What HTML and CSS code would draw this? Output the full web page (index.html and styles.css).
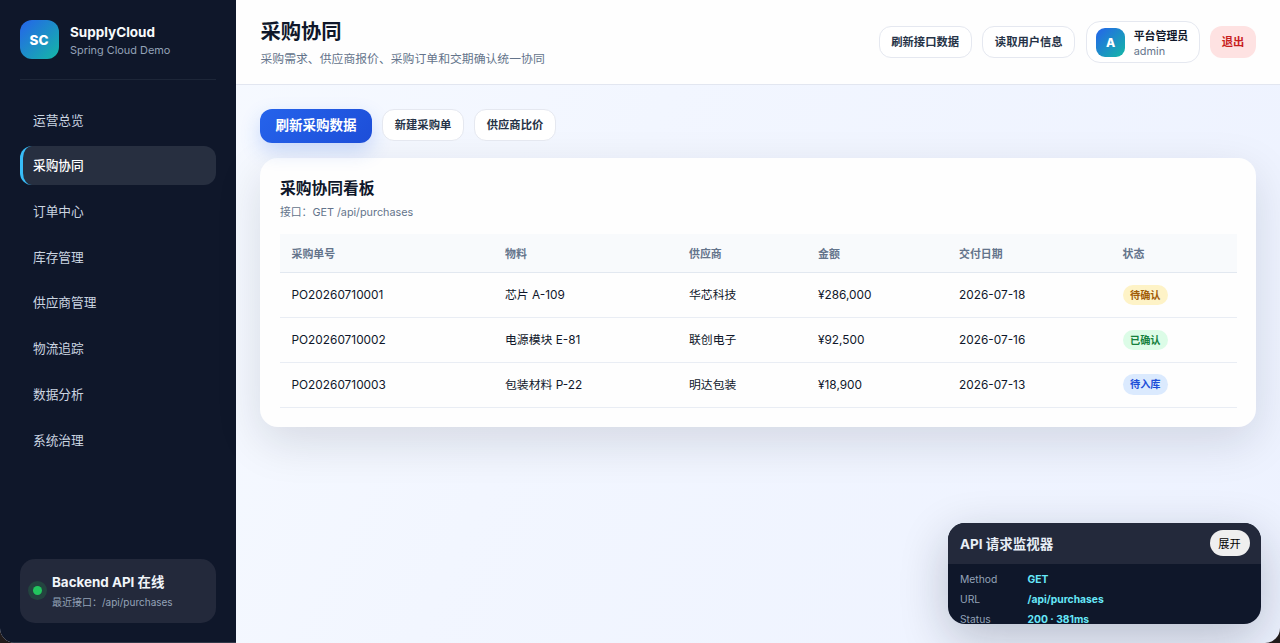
FILE: index.html
```html
<!DOCTYPE html>
<html lang="zh-CN">
<head>
<meta charset="utf-8">
<title>SupplyCloud</title>
<link rel="stylesheet" href="styles.css">
</head>
<body>
<div class="app">
  <aside class="sidebar">
    <div class="brand">
      <div class="logo">SC</div>
      <div>
        <div class="brand-name">SupplyCloud</div>
        <div class="brand-sub">Spring Cloud Demo</div>
      </div>
    </div>
    <nav class="nav">
      <a class="nav-item">运营总览</a>
      <a class="nav-item active">采购协同</a>
      <a class="nav-item">订单中心</a>
      <a class="nav-item">库存管理</a>
      <a class="nav-item">供应商管理</a>
      <a class="nav-item">物流追踪</a>
      <a class="nav-item">数据分析</a>
      <a class="nav-item">系统治理</a>
    </nav>
    <div class="status">
      <span class="dot"></span>
      <div>
        <div class="status-title">Backend API 在线</div>
        <div class="status-sub">最近接口：/api/purchases</div>
      </div>
    </div>
  </aside>
  <main class="main">
    <header class="topbar">
      <div>
        <h1 class="page-title">采购协同</h1>
        <p class="page-sub">采购需求、供应商报价、采购订单和交期确认统一协同</p>
      </div>
      <div class="actions">
        <button class="btn">刷新接口数据</button>
        <button class="btn">读取用户信息</button>
        <div class="user">
          <div class="avatar">A</div>
          <div>
            <div class="user-name">平台管理员</div>
            <div class="user-id">admin</div>
          </div>
        </div>
        <button class="btn logout">退出</button>
      </div>
    </header>
    <section class="content">
      <div class="toolbar">
        <button class="btn primary">刷新采购数据</button>
        <button class="btn tool">新建采购单</button>
        <button class="btn tool">供应商比价</button>
      </div>
      <div class="card">
        <h2 class="card-title">采购协同看板</h2>
        <p class="card-sub">接口：GET /api/purchases</p>
        <table class="table">
          <colgroup><col class="c-id"><col class="c-item"><col class="c-supplier"><col class="c-amount"><col class="c-date"><col></colgroup>
          <thead>
            <tr><th>采购单号</th><th>物料</th><th>供应商</th><th>金额</th><th>交付日期</th><th>状态</th></tr>
          </thead>
          <tbody>
            <tr><td>PO20260710001</td><td>芯片 A-109</td><td>华芯科技</td><td>¥286,000</td><td>2026-07-18</td><td><span class="pill amber">待确认</span></td></tr>
            <tr><td>PO20260710002</td><td>电源模块 E-81</td><td>联创电子</td><td>¥92,500</td><td>2026-07-16</td><td><span class="pill green">已确认</span></td></tr>
            <tr><td>PO20260710003</td><td>包装材料 P-22</td><td>明达包装</td><td>¥18,900</td><td>2026-07-13</td><td><span class="pill blue">待入库</span></td></tr>
          </tbody>
        </table>
      </div>
    </section>
  </main>
  <div class="monitor">
    <div class="monitor-head"><span>API 请求监视器</span><button class="expand">展开</button></div>
    <div class="monitor-body">
      <span>Method</span><b>GET</b>
      <span>URL</span><b>/api/purchases</b>
      <span>Status</span><b>200 · 381ms</b>
    </div>
  </div>
</div>
</body>
</html>
```
FILE: styles.css
```css
* { box-sizing: border-box; }
body {
  margin: 0;
  height: 643px;
  overflow: hidden;
  background: #211b1b;
  color: #0f172a;
  font-family: Inter, "Noto Sans CJK SC", sans-serif;
}
h1, h2, p { margin: 0; }
button { font-family: inherit; white-space: nowrap; }

.app {
  display: flex;
  height: 643px;
  overflow: hidden;
  border-radius: 0 0 15px 15px;
  background: linear-gradient(115deg, #f8fbff 0%, #f2f6ff 45%, #edf2ff 100%);
  position: relative;
}

.sidebar {
  display: flex;
  flex-direction: column;
  width: 236px;
  flex: none;
  padding: 20px 20px 20.5px 19.5px;
  background: #0f172a;
  box-shadow: inset 0 -1px #303849;
}
.brand {
  display: flex;
  gap: 11.5px;
  height: 60px;
  border-bottom: 1px solid #1d2638;
}
.logo, .avatar {
  display: grid;
  place-items: center;
  background: linear-gradient(135deg, #2563eb, #14b8a6);
  color: #fff;
  font-weight: 800;
}
.logo { width: 39px; height: 39px; border-radius: 12px; font-size: 13.5px; }
.brand-name { padding-top: 3px; font-size: 13.5px; font-weight: 700; line-height: 18px; color: #f8fafc; }
.brand-sub { font-size: 10.9px; line-height: 18px; color: #94a3b8; }

.nav { display: flex; flex-direction: column; gap: 6.7px; padding-top: 20.7px; }
.nav-item {
  height: 39px;
  padding-left: 10.5px;
  border-left: 3px solid transparent;
  border-radius: 12px;
  font-size: 12.7px;
  line-height: 40px;
  color: #cbd5e1;
}
.nav-item.active { background: #272f40; border-left-color: #38bdf8; color: #fff; font-weight: 500; }

.status {
  display: flex;
  align-items: center;
  gap: 10px;
  margin-top: auto;
  height: 63.5px;
  padding-left: 13.5px;
  border-radius: 15px;
  background: #23293b;
}
.dot { width: 9px; height: 9px; border-radius: 50%; background: #22c55e; box-shadow: 0 0 0 5px #23443f; }
.status-title { padding-top: 2px; font-size: 13.4px; font-weight: 700; line-height: 21px; color: #f1f5f9; }
.status-sub { font-size: 10px; line-height: 18px; color: #94a3b8; }

.main { flex: 1; min-width: 0; display: flex; flex-direction: column; }
.topbar {
  display: flex;
  justify-content: space-between;
  align-items: center;
  height: 85px;
  padding: 0 24px 0 24.5px;
  background: #fefefe;
  border-bottom: 1px solid #e2e6f0;
}
.page-title { padding-top: 3px; font-size: 20.3px; line-height: 29px; font-weight: 700; }
.page-sub { padding-top: 2px; font-size: 11.85px; line-height: 22px; color: #64748b; }
.actions { display: flex; align-items: center; gap: 10.3px; }
.btn {
  width: 93.3px;
  height: 32.5px;
  padding: 0;
  border: 1px solid #e5e8f0;
  border-radius: 12px;
  background: #fff;
  color: #263347;
  font-size: 11.3px;
  font-weight: 600;
  line-height: 31px;
}
.user {
  display: flex;
  align-items: center;
  gap: 8.5px;
  width: 114px;
  height: 42px;
  padding-left: 9.5px;
  border: 1px solid #e5e8f0;
  border-radius: 14px;
  background: #fff;
  white-space: nowrap;
}
.avatar { width: 29px; height: 29px; border-radius: 9px; font-size: 12px; }
.user-name { padding-top: 2px; font-size: 10.9px; line-height: 15px; font-weight: 600; }
.user-id { font-size: 10.9px; line-height: 14px; color: #64748b; }
.btn.logout { width: 46px; border: 0; background: #fee2e2; color: #c81e1e; font-weight: 700; line-height: 33px; }

.content { padding: 24px 24px 0 24px; }
.toolbar { display: flex; gap: 10px; height: 48.5px; align-items: flex-start; }
.btn.primary {
  width: 112px;
  height: 33.5px;
  border: 0;
  background: linear-gradient(135deg, #2563eb, #1d4ed8);
  color: #fff;
  font-size: 13.5px;
  font-weight: 700;
  line-height: 33px;
  box-shadow: 0 8px 20px rgba(37, 99, 235, .22);
}
.btn.tool { width: 82px; height: 32px; }
.card {
  height: 269.5px;
  padding: 19.5px 19.5px 0 20px;
  border-radius: 18px;
  background: #fefefe;
  box-shadow: 0 15px 46px rgba(15, 23, 42, .13);
}
.card-title { font-size: 15.75px; line-height: 24px; font-weight: 700; }
.card-sub { padding-top: 1px; font-size: 10.8px; line-height: 22px; color: #64748b; }
.table { width: 100%; margin-top: 10px; table-layout: fixed; border-collapse: separate; border-spacing: 0; }
.c-id { width: 213.5px; }
.c-item { width: 184px; }
.c-supplier { width: 129px; }
.c-amount { width: 141px; }
.c-date { width: 163.5px; }
.table th {
  height: 39px;
  padding: 0 11.5px;
  border-bottom: 1px solid #e2e8f0;
  background: #f8fafc;
  color: #64748b;
  font-size: 10.9px;
  font-weight: 600;
  text-align: left;
}
.table td {
  height: 44.9px;
  padding: 2px 11.5px 0;
  border-bottom: 1px solid #e9edf4;
  font-size: 11.85px;
  line-height: 21px;
}
.table td:last-child { padding-top: 0; }
.pill {
  display: block;
  width: 45.5px;
  height: 20.5px;
  border-radius: 11px;
  font-size: 10.2px;
  font-weight: 700;
  line-height: 20px;
  text-align: center;
}
.amber { background: #fef3c7; color: #a15c07; }
.green { background: #dcfce7; color: #15803d; }
.blue { background: #dbeafe; color: #1d4ed8; }

.monitor {
  position: absolute;
  right: 19px;
  bottom: 19px;
  width: 313px;
  height: 101.5px;
  overflow: hidden;
  border-radius: 17px;
  background: #0f172a;
  box-shadow: 0 15px 48px rgba(15, 23, 42, .24);
}
.monitor-head {
  display: flex;
  align-items: center;
  justify-content: space-between;
  height: 41px;
  padding: 0 11.5px 0 12px;
  background: #23293b;
  color: #e8eef6;
  font-size: 13.5px;
  font-weight: 700;
}
.expand {
  width: 40px;
  height: 26px;
  padding: 0;
  border: 0;
  border-radius: 13px;
  background: #efefef;
  color: #000;
  font-size: 11.2px;
  font-weight: 400;
}
.monitor-body {
  display: grid;
  grid-template-columns: 67.5px 1fr;
  grid-auto-rows: 20.3px;
  padding: 5.3px 12px 0;
  color: #94a3b8;
  font-size: 10.3px;
  line-height: 20px;
}
.monitor-body b { color: #67e8f9; font-weight: 700; }
```
